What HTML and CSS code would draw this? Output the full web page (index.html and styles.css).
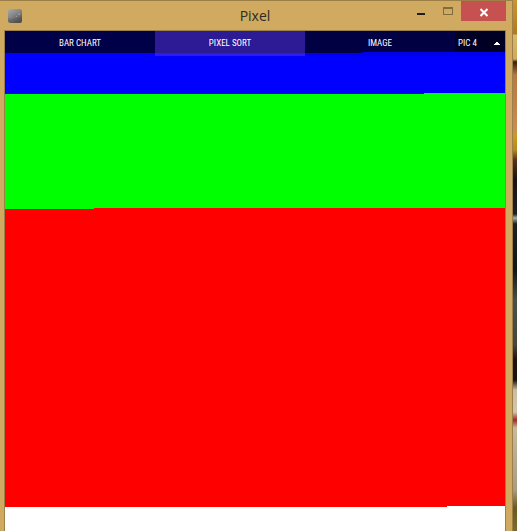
FILE: index.html
```html
<!DOCTYPE html>
<html lang="en">
<head>
<meta charset="utf-8">
<meta name="viewport" content="width=device-width, initial-scale=1">
<title>Pixel</title>
<link rel="stylesheet" href="styles.css">
</head>
<body>
<main class="window">
  <header class="titlebar">
    <svg class="app-icon" viewBox="0 0 14 14" aria-hidden="true">
      <defs><linearGradient id="stone" x1="0" y1="0" x2=".6" y2="1"><stop offset="0" stop-color="#aaa"/><stop offset=".5" stop-color="#858585"/><stop offset="1" stop-color="#505050"/></linearGradient></defs>
      <rect width="14" height="14" rx="2" fill="url(#stone)"/>
      <path d="M0 9l4 1 4-1 6-2v5l-2 2H2l-2-2z" fill="#505050" opacity=".25"/>
      <path d="M10 5h2v1h-2zM8 7h1v1H8zM11 4h1v1h-1z" fill="#989898"/>
    </svg>
    <h1 class="title">Pixel</h1>
    <div class="window-buttons">
      <button class="window-button" aria-label="Minimize"><svg viewBox="0 0 8 20"><path d="M0 12h8v2H0z" fill="#1e1e1e"/></svg></button>
      <button class="window-button" aria-label="Maximize"><svg viewBox="0 0 10 20"><path d="M0 6h10v8H0zM1 8v5h8V8z" fill="#806b3c" fill-rule="evenodd"/></svg></button>
      <button class="window-button close" aria-label="Close"><svg viewBox="0 0 8 20"><path d="M.5 8l7 7M7.500 8l-7 7" stroke="#fff" stroke-width="2"/></svg></button>
    </div>
  </header>
  <section class="canvas">
    <div class="bands" role="img" aria-label="Sorted pixels">
      <div class="band dark"></div>
      <div class="band blue"></div>
      <div class="band green"></div>
      <div class="band red"></div>
    </div>
    <nav class="controls">
      <button class="control">BAR CHART</button>
      <button class="control active">PIXEL SORT</button>
      <button class="control image">IMAGE</button>
      <button class="control picker">PIC 4<svg class="caret" viewBox="0 0 6 3" aria-hidden="true"><path d="M2 0h2v1h1v1h1v1H0V2h1V1h1z" fill="#fff"/></svg></button>
    </nav>
  </section>
</main>
<div class="desktop"></div>
</body>
</html>
```
FILE: styles.css
```css
* { box-sizing: border-box; }
body {
  margin: 0;
  min-height: 100vh;
  display: flex;
  overflow: hidden;
  font-family: "Open Sans", sans-serif;
}
button {
  border: 0;
  padding: 0;
  margin: 0;
  background: none;
}
.window {
  flex: 1;
  display: flex;
  flex-direction: column;
  padding: 0 6px 0 4px;
  background: #cfaa60;
  border-top: 1px solid #9c8048;
  border-right: 1px solid #9c8048;
}
.titlebar {
  height: 29px;
  display: grid;
  grid-template-columns: 1fr auto 1fr;
  align-items: center;
}
.app-icon {
  width: 14px;
  height: 14px;
  margin-left: 4px;
}
.title {
  margin: 0;
  font-size: 14px;
  line-height: 20px;
  font-weight: 400;
  color: #2e2a22;
}
.window-buttons {
  display: flex;
  justify-content: flex-end;
  align-self: start;
}
.window-button {
  width: 27px;
  height: 20px;
  display: flex;
  justify-content: center;
}
.window-button svg { height: 20px; }
.window-button.close {
  width: 45px;
  background: #c75050;
}
.canvas {
  position: relative;
  flex: 1;
  border: 1px solid #9c8048;
  border-bottom: 0;
  background: #fff;
}
/* Each band ends in a partly filled row of pixels. */
.band {
  background: linear-gradient(var(--color) 0 0) top / 100% calc(100% - 1px) no-repeat,
    linear-gradient(90deg, var(--color) var(--fill), var(--next) 0);
}
.dark { --color: #000048; --next: #00f; --fill: 71.4%; height: 22px; }
.blue { --color: #00f; --next: #0f0; --fill: 83.8%; height: 41px; }
.green { --color: #0f0; --next: #f00; --fill: 17.8%; height: 115px; }
.red { --color: #f00; --next: #fff; --fill: 88.4%; height: 298px; }
.controls {
  position: absolute;
  top: 0;
  left: 0;
  right: 0;
  display: grid;
  grid-template-columns: 3fr 3fr 3fr 1fr;
}
.control {
  height: 25px;
  font: 9px/25px "Roboto Condensed", Roboto, sans-serif;
  color: #fff;
}
.active { background: rgba(90, 54, 225, .5); }
.image { background: rgba(0, 0, 0, .08); }
.picker {
  display: flex;
  align-items: center;
  justify-content: space-between;
  padding: 0 5px 0 3px;
  background: linear-gradient(rgba(0, 0, 0, .5) 21px, rgba(0, 0, 0, .08) 0);
}
.caret { width: 6px; height: 3px; }
.desktop {
  width: 4px;
  background: linear-gradient(#c9952f, #b07a1c 34px, #d8b768 35px, #cfa95e 59px, #3a2008 62px, #b57a42 75px, #c98c52 130px, #c99b20 136px, #b58a1c 150px, #5a3018 160px, #181410 180px, #20201e 214px, #a0b0b0 218px, #20201c 224px, #141412 270px, #485048 300px, #46473c 345px, #241008 360px, #181410 380px, #c8bda4 390px, #d2c5b0 412px, #a02828 420px, #c8b9a0 428px, #a89c84 490px, #6c5820 508px, #7c6c28);
}
```
